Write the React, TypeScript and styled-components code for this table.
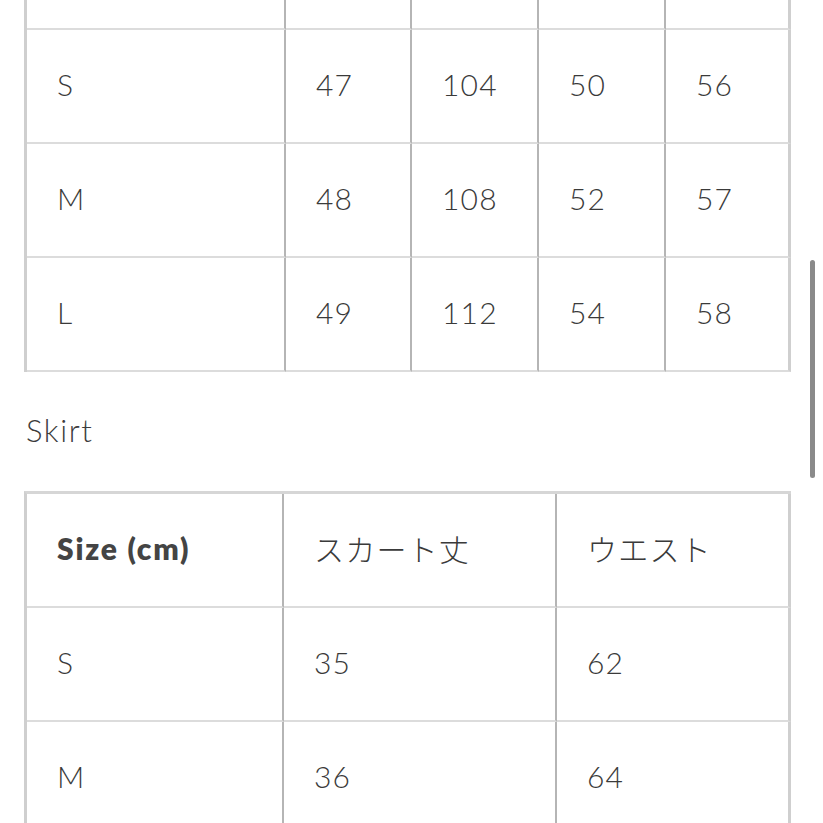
import styled, { createGlobalStyle } from "styled-components";

const GlobalStyle = createGlobalStyle`
    html, body {
        margin: 0;
        padding: 0;
        background: #ffffff;
    }
    * {
        box-sizing: border-box;
    }
`;

const Viewport = styled.div`
    position: relative;
    width: 823px;
    height: 823px;
    overflow: hidden;
    background: #fff;
    font-family: Lato, "Noto Sans CJK JP", sans-serif;
    color: #3a3a3a;
`;

const Content = styled.div`
    padding-left: 24px;
    width: 791px;
`;

const Table = styled.table<{ $offset?: number }>`
    width: 767px;
    table-layout: fixed;
    border-collapse: separate;
    border-spacing: 0;
    border-left: 3px solid #cfcfcf;
    border-top: 3px solid #d6d6d6;
    margin-top: ${(p) => p.$offset ?? 0}px;
`;

const Col = styled.col<{ $w: number }>`
    width: ${(p) => p.$w}px;
`;

const Cell = styled.td<{ $bold?: boolean }>`
    height: 114px;
    padding: 0 0 4px 30px;
    border-right: 2px solid #b5b5b5;
    border-bottom: 2px solid #dcdcdc;
    font-size: 30px;
    letter-spacing: ${(p) => (p.$bold ? 1.8 : 1.2)}px;
    font-weight: ${(p) => (p.$bold ? 800 : 300)};
    color: ${(p) => (p.$bold ? "#444" : "#3a3a3a")};
    vertical-align: middle;
    white-space: nowrap;
    &:last-child {
        border-right: 3px solid #cfcfcf;
    }
`;

const Heading = styled.h2`
    margin: 40px 0 43px 2px;
    font-size: 31px;
    line-height: 36px;
    font-weight: 300;
    letter-spacing: 1.6px;
    color: #3c3c3c;
`;

const ScrollThumb = styled.div`
    position: absolute;
    left: 810px;
    top: 260px;
    width: 5px;
    height: 218px;
    border-radius: 3px;
    background: #8a8a8a;
`;

const topCols = [259, 126, 127, 127, 125];
// header row is scrolled out of view, only its bottom edge shows
const topRows = [
    ["", "", "", "", ""],
    ["S", "47", "104", "50", "56"],
    ["M", "48", "108", "52", "57"],
    ["L", "49", "112", "54", "58"],
];

const skirtCols = [257, 273, 234];
const skirtRows = [
    ["Size (cm)", "スカート丈", "ウエスト"],
    ["S", "35", "62"],
    ["M", "36", "64"],
];

const SizeTable = ({
    cols,
    rows,
    offset,
}: {
    cols: number[];
    rows: string[][];
    offset?: number;
}) => (
    <Table $offset={offset}>
        <colgroup>
            {cols.map((w, i) => (
                <Col $w={w} key={i} />
            ))}
        </colgroup>
        <tbody>
            {rows.map((row, r) => (
                <tr key={r}>
                    {row.map((text, c) => (
                        <Cell $bold={r === 0 && c === 0} key={c}>
                            {text}
                        </Cell>
                    ))}
                </tr>
            ))}
        </tbody>
    </Table>
);

const App = () => {
    return (
        <>
            <GlobalStyle />
            <Viewport>
                <Content>
                    <SizeTable cols={topCols} rows={topRows} offset={-87} />
                    <Heading>Skirt</Heading>
                    <SizeTable cols={skirtCols} rows={skirtRows} />
                </Content>
                <ScrollThumb />
            </Viewport>
        </>
    );
};

export default App;
